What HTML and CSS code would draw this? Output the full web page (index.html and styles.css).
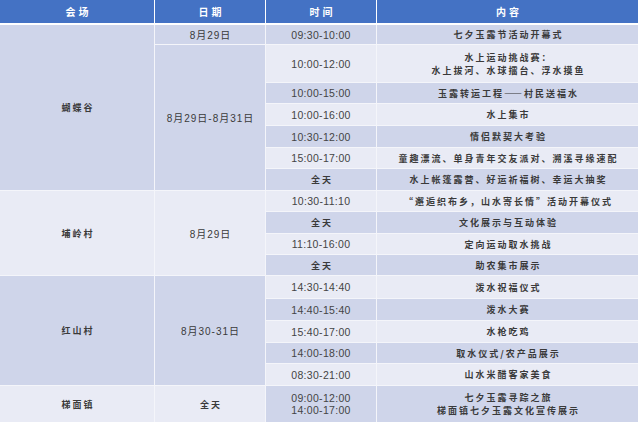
FILE: index.html
```html
<!DOCTYPE html>
<html lang="zh">
<head>
<meta charset="utf-8">
<title>活动日程</title>
<link rel="stylesheet" href="styles.css">
</head>
<body>
<div class="table">
  <div class="head">
    <div class="hc">会场</div>
    <div class="hc">日期</div>
    <div class="hc">时间</div>
    <div class="hc">内容</div>
  </div>
  <div class="body">
    <div class="c cn d s7">蝴蝶谷</div>
    <div class="c dt d">8月29日</div>
    <div class="c tm d">09:30-10:00</div>
    <div class="c cn d">七夕玉露节活动开幕式</div>

    <div class="c dt d s6">8月29日-8月31日</div>
    <div class="c tm l">10:00-12:00</div>
    <div class="c cn l two">水上运动挑战赛：<br>水上拔河、水球擂台、浮水摸鱼</div>

    <div class="c tm d">10:00-15:00</div>
    <div class="c cn d">玉露转运工程——村民送福水</div>

    <div class="c tm l">10:00-16:00</div>
    <div class="c cn l">水上集市</div>

    <div class="c tm d">10:30-12:00</div>
    <div class="c cn d">情侣默契大考验</div>

    <div class="c tm l">15:00-17:00</div>
    <div class="c cn l">童趣漂流、单身青年交友派对、溯溪寻缘速配</div>

    <div class="c cn d">全天</div>
    <div class="c cn d">水上帐篷露营、好运祈福树、幸运大抽奖</div>

    <div class="c cn l s4">埔岭村</div>
    <div class="c dt l s4">8月29日</div>
    <div class="c tm l">10:30-11:10</div>
    <div class="c cn l">“邂逅织布乡，山水寄长情”活动开幕仪式</div>

    <div class="c cn d">全天</div>
    <div class="c cn d">文化展示与互动体验</div>

    <div class="c tm l">11:10-16:00</div>
    <div class="c cn l">定向运动取水挑战</div>

    <div class="c cn d">全天</div>
    <div class="c cn d">助农集市展示</div>

    <div class="c cn d s5">红山村</div>
    <div class="c dt d s5">8月30-31日</div>
    <div class="c tm l">14:30-14:40</div>
    <div class="c cn l">泼水祝福仪式</div>

    <div class="c tm d">14:40-15:40</div>
    <div class="c cn d">泼水大赛</div>

    <div class="c tm l">15:40-17:00</div>
    <div class="c cn l">水枪吃鸡</div>

    <div class="c tm d">14:00-18:00</div>
    <div class="c cn d">取水仪式/农产品展示</div>

    <div class="c tm l">08:30-21:00</div>
    <div class="c cn l">山水米醋客家美食</div>

    <div class="c cn l">梯面镇</div>
    <div class="c cn l">全天</div>
    <div class="c tm d two">09:00-12:00<br>14:00-17:00</div>
    <div class="c cn d two">七夕玉露寻踪之旅<br>梯面镇七夕玉露文化宣传展示</div>
  </div>
</div>
</body>
</html>
```

FILE: styles.css
```css
html, body {
  margin: 0;
  padding: 0;
  background: #ffffff;
}

.table {
  width: 638px;
  display: flex;
  flex-direction: column;
  gap: 2px;
  background: #ffffff;
}

.head {
  display: grid;
  grid-template-columns: 154px 110px 110px 261px;
  column-gap: 1px;
  height: 23px;
  background: #ffffff;
}

.hc {
  background: #4472c4;
  color: #ffffff;
  font-family: "Noto Sans CJK SC", sans-serif;
  font-weight: 700;
  font-size: 10px;
  letter-spacing: 3px;
  padding-left: 3px;
  display: flex;
  align-items: center;
  justify-content: center;
}

.body {
  display: grid;
  grid-template-columns: 154px 110px 110px 261px;
  grid-template-rows: 19px 37px 20px 21px 21px 20px 21px 20px 21px 20px 20px 22px 21px 21px 20px 21px 36px;
  gap: 1px;
  background: #f4f5fa;
}

.c {
  display: flex;
  align-items: center;
  justify-content: center;
  text-align: center;
  color: #3a3a3a;
}

.d { background: #cfd5ea; }
.l { background: #e9ebf5; }

.s4 { grid-row: span 4; }
.s5 { grid-row: span 5; }
.s6 { grid-row: span 6; }
.s7 { grid-row: span 7; }

.cn {
  font-family: "Noto Sans CJK SC", sans-serif;
  font-weight: 700;
  font-size: 9px;
  letter-spacing: 2px;
  padding-left: 2px;
}

.cn.two {
  line-height: 13px;
}

.tm {
  font-family: "Liberation Sans", "Noto Sans CJK SC", sans-serif;
  font-size: 10.5px;
  letter-spacing: 0.3px;
  color: #444444;
}

.tm.two {
  line-height: 12px;
}

.dt {
  font-family: "Liberation Sans", "Noto Sans CJK SC", sans-serif;
  font-size: 10px;
  letter-spacing: 1px;
  padding-left: 1px;
  color: #3a3a3a;
}
```
